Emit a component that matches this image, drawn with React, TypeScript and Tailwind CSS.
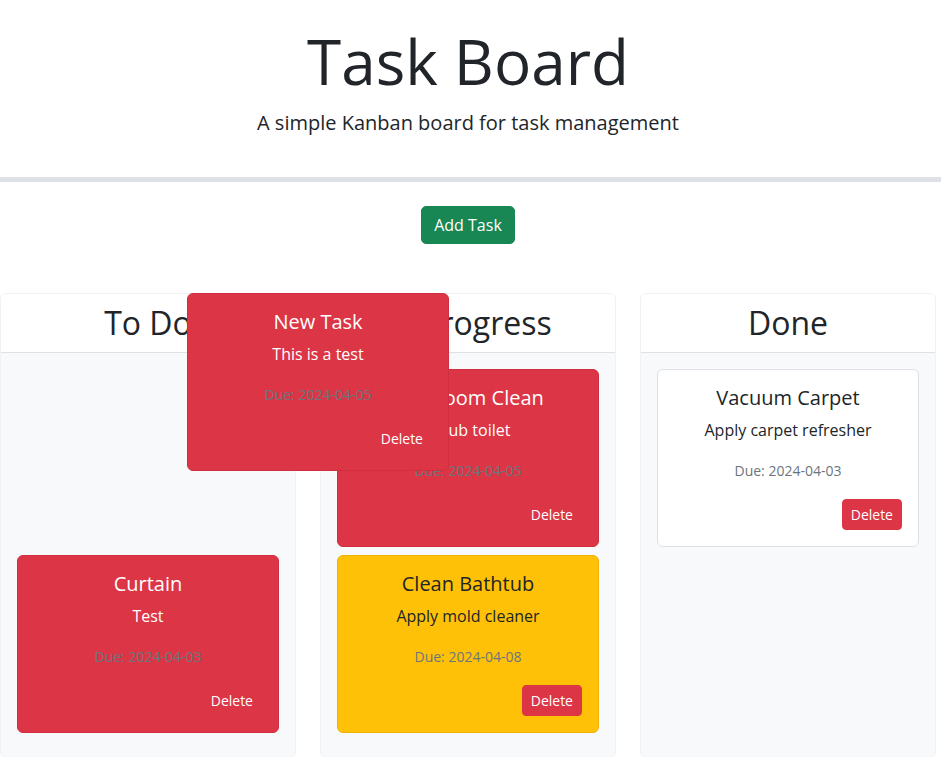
type Tone = "red" | "yellow" | "white";

interface Task {
  id: number;
  title: string;
  description: string;
  due: string;
  tone: Tone;
}

const toneClasses: Record<Tone, string> = {
  red: "bg-[#dc3545] border-[#d12f3f] text-white",
  yellow: "bg-[#ffc107] border-[#eeb306] text-[#212529]",
  white: "bg-white border-[#dee2e6] text-[#212529]",
};

function TaskCard({ task, hidden = false }: { task: Task; hidden?: boolean }) {
  return (
    <div
      className={`mb-2 w-[262px] rounded-[6px] border p-4 text-center ${toneClasses[task.tone]} ${
        hidden ? "invisible" : ""
      }`}
    >
      <h5 className="mb-2 text-[20px] leading-[1.2] font-normal">{task.title}</h5>
      <p className="mb-4 text-[16px] leading-[24px]">{task.description}</p>
      <p className="mb-4 text-[16px] leading-[24px]">
        <span className="text-[14px] text-[#6c757d]">Due: {task.due}</span>
      </p>
      <div className="flex justify-end">
        <button className="rounded-[4px] border border-[#dc3545] bg-[#dc3545] px-2 py-1 text-[14px] leading-[21px] text-white">
          Delete
        </button>
      </div>
    </div>
  );
}

function Column({ title, children }: { title: string; children: React.ReactNode }) {
  return (
    <div className="flex flex-col overflow-hidden rounded-[6px] border border-[#f1f2f3] bg-[#f8f9fa]">
      <div className="border-b border-[#dee2e6] bg-white py-[10px] text-center">
        <h2 className="text-[32px] leading-[38px] font-normal text-[#212529]">{title}</h2>
      </div>
      <div className="flex-1 p-4">{children}</div>
    </div>
  );
}

const dragged: Task = { id: 1, title: "New Task", description: "This is a test", due: "2024-04-05", tone: "red" };

const todo: Task[] = [{ id: 2, title: "Curtain", description: "Test", due: "2024-04-03", tone: "red" }];

const inProgress: Task[] = [
  { id: 3, title: "Bathroom Clean", description: "Scrub toilet", due: "2024-04-05", tone: "red" },
  { id: 4, title: "Clean Bathtub", description: "Apply mold cleaner", due: "2024-04-08", tone: "yellow" },
];

const done: Task[] = [
  { id: 5, title: "Vacuum Carpet", description: "Apply carpet refresher", due: "2024-04-03", tone: "white" },
];

export default function App() {
  return (
    <div className="relative min-h-[757px] bg-white text-[#212529] font-['Open_Sans',sans-serif]">
      <header className="border-b-[5px] border-[#dee2e6] pt-[24px] pb-[39px]">
        <div className="w-[936px] text-center">
          <h1 className="mb-[10px] text-[62px] leading-[1.2] font-normal">Task Board</h1>
          <p className="text-[20px] leading-[30px]">A simple Kanban board for task management</p>
        </div>
      </header>

      <div className="w-[936px]">
        <div className="flex justify-center pt-[24px] pb-[49px]">
          <button className="rounded-[5px] border border-[#198754] bg-[#198754] px-3 py-[6px] text-[16px] leading-[24px] text-white">
            Add Task
          </button>
        </div>

        <div className="grid grid-cols-[296px_296px_296px] gap-6">
          <Column title="To Do">
            <TaskCard task={dragged} hidden />
            {todo.map((t) => (
              <TaskCard key={t.id} task={t} />
            ))}
          </Column>
          <Column title="In Progress">
            {inProgress.map((t) => (
              <TaskCard key={t.id} task={t} />
            ))}
          </Column>
          <Column title="Done">
            {done.map((t) => (
              <TaskCard key={t.id} task={t} />
            ))}
          </Column>
        </div>
      </div>

      {/* card being dragged */}
      <div className="absolute top-[293px] left-[187px]">
        <TaskCard task={dragged} />
      </div>
    </div>
  );
}
